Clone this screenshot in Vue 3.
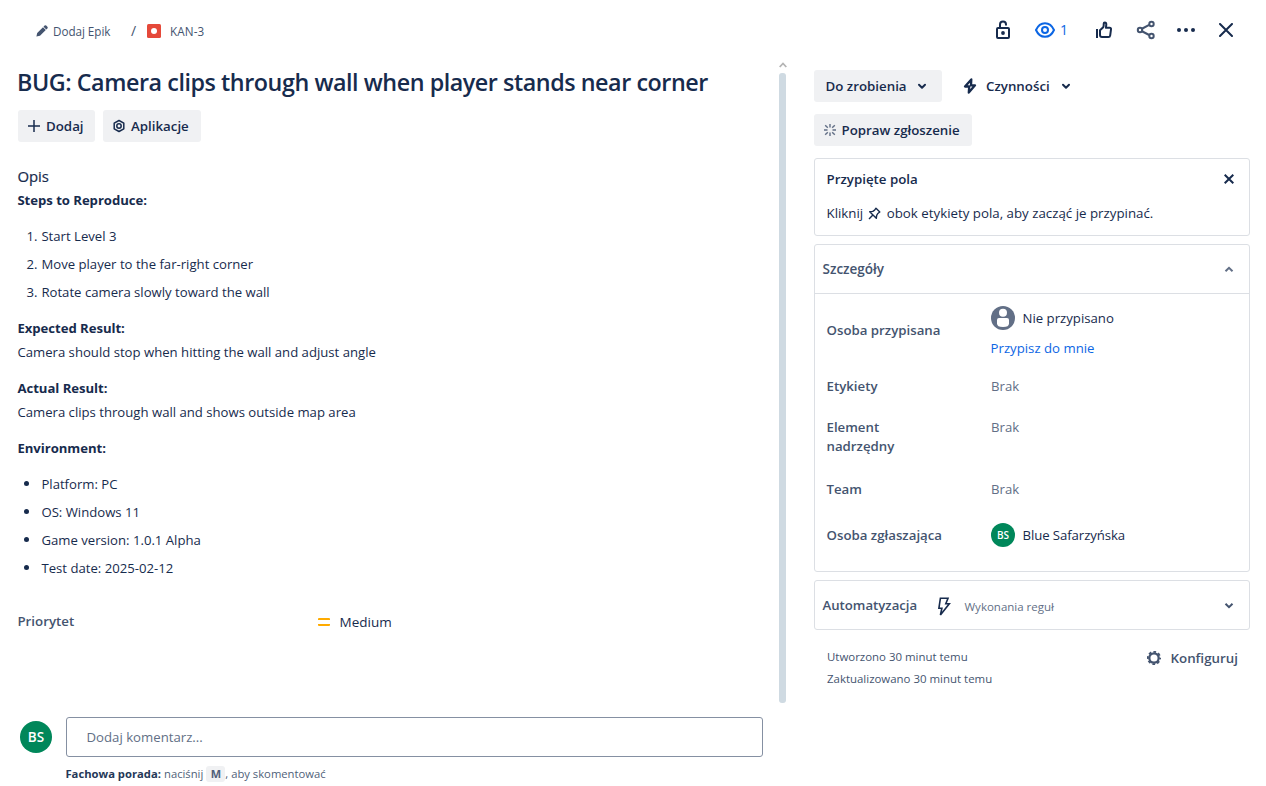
<script setup>
const steps = ['Start Level 3', 'Move player to the far-right corner', 'Rotate camera slowly toward the wall']
const env = ['Platform: PC', 'OS: Windows 11', 'Game version: 1.0.1 Alpha', 'Test date: 2025-02-12']
</script>

<template>
  <div class="page">
    <header class="top">
      <div class="crumbs">
        <svg class="pencil" width="12" height="12" viewBox="0 0 12 12"><path d="M0.4 11.6 1.2 8 7 2.200 9.800 5 4 10.8ZM7.500 1.700 8.600.6Q9.400-.1 10.200.6L11.4 1.8Q12.100 2.600 11.4 3.400L10.3 4.500Z" fill="#44546f" /></svg>
        <span class="epic">Dodaj Epik</span>
        <span class="slash">/</span>
        <svg class="bug" width="14" height="14" viewBox="0 0 14 14"><rect width="14" height="14" rx="1.5" fill="#e5493a" /><circle cx="7" cy="7" r="3" fill="#fff" /></svg>
        <span class="key">KAN-3</span>
      </div>
      <div class="tools">
        <svg class="t-lock" width="16" height="20" viewBox="0 0 16 20" fill="none" stroke="#172b4d" stroke-width="2"><rect x="2" y="8" width="12" height="10" rx="1" /><path d="M5 8V4.5Q5 1.6 8 1.6T11 4.5V5.4" /><circle cx="8" cy="13" r="1.9" fill="#172b4d" stroke="none" /></svg>
        <svg class="t-eye" width="22" height="18" viewBox="0 0 22 18" fill="none" stroke="#0c66e4" stroke-width="2"><path d="M2 9C4 4.500 7.300 2.200 11 2.200S18 4.500 20 9C18 13.500 14.700 15.800 11 15.800S4 13.500 2 9Z" /><circle cx="11" cy="9" r="3" /></svg>
        <span class="watch">1</span>
        <svg class="t-like" width="18" height="18" viewBox="0 0 18 18" fill="none" stroke="#172b4d" stroke-width="2" stroke-linejoin="round"><path d="M2 8V17" stroke-width="2" /><path d="M5 9.300 8.200 6.200Q8.700 5.400 8.700 4V2.800Q8.700 1.600 9.800 1.600 11.300 1.700 11.300 3.600L10.900 6.800H14.600Q16.200 6.800 16 8.300L15.200 14.300Q15 16 13.300 16H7Q5 16 5 14Z" /></svg>
        <svg class="t-share" width="20" height="20" viewBox="0 0 20 20" fill="none" stroke="#44546f" stroke-width="2"><path d="M5.500 9 13.200 4.900M5.500 11 13.200 15" /><circle cx="4" cy="10" r="2.200" /><circle cx="15.500" cy="4" r="2.200" /><circle cx="15.500" cy="16" r="2.200" /></svg>
        <svg class="t-more" width="18" height="4" viewBox="0 0 18 4" fill="#172b4d"><circle cx="2" cy="2" r="2" /><circle cx="9" cy="2" r="2" /><circle cx="16" cy="2" r="2" /></svg>
        <svg class="t-close" width="14" height="14" viewBox="0 0 14 14" stroke="#172b4d" stroke-width="2" stroke-linecap="round"><path d="M1 1 13 13M13 1 1 13" /></svg>
      </div>
    </header>

    <div class="columns">
      <main class="main">
        <h1>BUG: Camera clips through wall when player stands near corner</h1>
        <div class="actions">
          <button class="btn add"><svg width="12" height="12" viewBox="0 0 12 12" stroke="#172b4d" stroke-width="1.500"><path d="M6 0V12M0 6H12" /></svg>Dodaj</button>
          <button class="btn apps"><svg width="12" height="14" viewBox="0 0 12 14" fill="none" stroke="#172b4d" stroke-width="1.500"><path d="M6 1.500 10.800 4.200V9.800L6 12.500 1.200 9.800V4.200Z" stroke-linejoin="round" /><circle cx="6" cy="7" r="2.200" /></svg>Aplikacje</button>
        </div>

        <section class="desc">
          <h2>Opis</h2>
          <p class="strong">Steps to Reproduce:</p>
          <ol><li v-for="(s, i) in steps" :key="s"><span class="num">{{ i + 1 }}.</span>{{ s }}</li></ol>
          <p class="strong">Expected Result:</p>
          <p>Camera should stop when hitting the wall and adjust angle</p>
          <p class="strong gap">Actual Result:</p>
          <p>Camera clips through wall and shows outside map area</p>
          <p class="strong gap">Environment:</p>
          <ul><li v-for="e in env" :key="e"><span class="dot"></span>{{ e }}</li></ul>
        </section>

        <div class="priority">
          <span class="label">Priorytet</span>
          <span class="bars"></span>
          <span class="value">Medium</span>
        </div>

        <div class="comment">
          <span class="avatar big">BS</span>
          <div class="comment-body">
            <div class="input">Dodaj komentarz...</div>
            <div class="tip"><b>Fachowa porada:</b><span class="press">naciśnij</span><kbd>M</kbd><span class="rest">, aby skomentować</span></div>
          </div>
        </div>
      </main>

      <div class="scroll">
        <svg width="8" height="6" viewBox="0 0 8 6" fill="none" stroke="#b4b4b4" stroke-width="1.800"><path d="M.7 5 4 1.500 7.300 5" /></svg>
        <div class="thumb"></div>
      </div>

      <aside class="side">
        <div class="row">
          <button class="btn status">Do zrobienia<svg width="10" height="7" viewBox="0 0 10 7" fill="none" stroke="#172b4d" stroke-width="2" stroke-linecap="round" stroke-linejoin="round"><path d="M2 1.800 5 4.800 8 1.800" /></svg></button>
          <button class="btn flat"><svg class="bolt" width="14" height="16" viewBox="0 0 14 16" fill="none" stroke="#172b4d" stroke-width="2.300" stroke-linejoin="round"><path d="M8.300 1.500 2 8.500H6.200L5.800 14.500 12 7.300H8Z" /></svg>Czynności<svg width="10" height="7" viewBox="0 0 10 7" fill="none" stroke="#172b4d" stroke-width="2" stroke-linecap="round" stroke-linejoin="round"><path d="M2 1.800 5 4.800 8 1.800" /></svg></button>
        </div>
        <button class="btn improve"><svg width="12" height="12" viewBox="0 0 12 12" stroke="#626f86" stroke-width="1.400"><path d="M6 0V3.500M6 8.500V12M0 6H3.500M8.500 6H12M1.200 1.200 3.800 3.800M8.200 8.200 10.800 10.800M1.200 10.800 3.800 8.200M8.200 3.800 10.800 1.200" /></svg>Popraw zgłoszenie</button>

        <section class="card pinned">
          <div class="pin-head"><span class="pin-title">Przypięte pola</span><svg width="10" height="10" viewBox="0 0 10 10" stroke="#172b4d" stroke-width="2"><path d="M.7.7 9.300 9.300M9.300.7.7 9.300" /></svg></div>
          <div class="pin-text"><span class="click">Kliknij</span><svg width="13" height="13" viewBox="0 0 13 13" fill="none" stroke="#172b4d" stroke-width="1.400" stroke-linejoin="round"><path d="M8 1.200 11.800 5 9.800 6.500 8.700 8.300 8.300 11.300 1.700 4.700 4.800 4.400 6.600 3.200ZM4.900 8.100 1 12" /></svg><span class="next">obok etykiety pola, aby zacząć je przypinać.</span></div>
        </section>

        <section class="card details">
          <div class="card-head"><span class="szcz">Szczegóły</span><svg width="10" height="7" viewBox="0 0 10 7" fill="none" stroke="#626f86" stroke-width="2"><path d="M1.500 5.200 5 1.800 8.500 5.200" /></svg></div>
          <dl>
            <div class="field f1"><dt>Osoba przypisana</dt><dd><div class="person"><svg width="24" height="24" viewBox="0 0 24 24"><circle cx="12" cy="12" r="12" fill="#626f86" /><circle cx="12" cy="6.800" r="4" fill="#fff" /><path d="M6 14Q6 12 8 12H16Q18 12 18 14V17.500Q18 21 12 21T6 17.500Z" fill="#fff" /></svg><span>Nie przypisano</span></div><a class="assign">Przypisz do mnie</a></dd></div>
            <div class="field f2"><dt>Etykiety</dt><dd>Brak</dd></div>
            <div class="field f3"><dt>Element<br />nadrzędny</dt><dd>Brak</dd></div>
            <div class="field f4"><dt>Team</dt><dd>Brak</dd></div>
            <div class="field f5"><dt>Osoba zgłaszająca</dt><dd><div class="person"><span class="avatar small">BS</span><span class="reporter">Blue Safarzyńska</span></div></dd></div>
          </dl>
        </section>

        <section class="card auto">
          <span class="auto-title">Automatyzacja</span>
          <svg class="zap" width="14" height="20" viewBox="0 0 14 20" fill="none" stroke="#172b4d" stroke-width="1.600" stroke-linejoin="miter"><path d="M3.400 1.300H11L8.800 6.800H12.300L3.400 18 4.900 11.200H1.900Z" /></svg>
          <span class="runs">Wykonania reguł</span>
          <svg class="end" width="10" height="7" viewBox="0 0 10 7" fill="none" stroke="#44546f" stroke-width="2"><path d="M1.500 1.800 5 5.200 8.500 1.800" /></svg>
        </section>

        <footer>
          <div class="dates"><div>Utworzono 30 minut temu</div><div>Zaktualizowano 30 minut temu</div></div>
          <div class="config"><svg width="14" height="14" viewBox="-7 -7 14 14" fill="none" stroke="#44546f"><circle r="4.700" stroke-width="2.300" /><circle r="6.200" stroke-width="1.800" stroke-dasharray="2.700 2.170" stroke-dashoffset="1.350" /></svg><span>Konfiguruj</span></div>
        </footer>
      </aside>
    </div>
  </div>
</template>

<style>
body { background: #fff; }
</style>

<style scoped>
* { box-sizing: border-box; }
h1, h2, p, ol, ul, dl, dd, dt { margin: 0; padding: 0; }
svg { flex: none; display: block; }
.page { width: 1266px; height: 786px; overflow: hidden; display: flex; flex-direction: column; background: #fff; color: #172b4d; font: 400 13.500px/20px "Open Sans", "Noto Sans", sans-serif; white-space: nowrap; }
.top { height: 60px; flex: none; display: flex; justify-content: space-between; padding: 0 33px 0 36px; align-items: center; }
.crumbs { display: flex; align-items: center; color: #44546f; font-size: 11.700px; height: 20px; margin-top: 1px; }
.epic { margin-left: 5px; width: 78px; letter-spacing: -0.05px; }
.slash { width: 16px; font-size: 14px; }
.key { margin-left: 9px; letter-spacing: 0.1px; }
.tools { display: flex; align-items: center; height: 24px; }
.t-eye { margin-left: 23px; }
.watch { color: #0c66e4; margin-left: 4px; width: 8px; font-size: 14px; }
.t-like { margin-left: 27px; }
.t-share { margin-left: 23px; }
.t-more { margin-left: 21px; }
.t-close { margin-left: 24px; }
.columns { display: flex; flex: 1; min-height: 0; }
.main { width: 779px; flex: none; padding: 8px 16px 0 18px; }
h1 { font-size: 23.300px; line-height: 28px; font-weight: 600; letter-spacing: -0.440px; margin-left: -1px; }
.actions { display: flex; gap: 8px; margin-top: 14px; }
.btn { border: 0; margin: 0; height: 32px; border-radius: 3px; background: #f0f1f3; color: #172b4d; font: 600 13.300px/20px "Open Sans", "Noto Sans", sans-serif; display: flex; align-items: center; padding: 0 10px; white-space: nowrap; }
.add { width: 77px; gap: 6px; }
.apps { width: 98px; gap: 6px; }
.desc { margin: 24px 0 0 -0.600px; font-size: 13.150px; line-height: 24px; }
h2 { font-size: 14.900px; line-height: 20px; font-weight: 500; margin-bottom: 2px; -webkit-text-stroke: 0.2px #172b4d; }
.strong { font-weight: 700; letter-spacing: -0.04px; }
.gap, ol + .strong { margin-top: 12px; }
ol, ul { list-style: none; padding: 12px 0 0 24px; display: flex; flex-direction: column; gap: 4px; }
li { position: relative; height: 24px; }
.num { position: absolute; left: -15px; }
.dot { position: absolute; left: -17px; top: 9px; width: 5px; height: 5px; border-radius: 50%; background: #172b4d; }
.priority { display: flex; align-items: center; margin-top: 32px; height: 20px; }
.label { width: 300.600px; margin: -2px 0 0 -0.600px; font-weight: 600; color: #44546f; font-size: 13.300px; }
.bars { width: 12px; height: 8px; border-top: 2px solid #ffab00; border-bottom: 2px solid #ffab00; border-radius: 1px; margin-right: 9.500px; }
.comment { display: flex; margin-top: 85px; padding-left: 2px; }
.avatar { border-radius: 50%; background: #00875a; color: #fff; display: flex; align-items: center; justify-content: center; font-weight: 600; flex: none; }
.big { width: 32px; height: 32px; font-size: 13.500px; margin-top: 4px; }
.small { width: 24px; height: 24px; font-size: 10px; }
.comment-body { margin-left: 14px; flex: 1; }
.input { height: 40px; border: 1px solid #8590a2; border-radius: 3px; padding: 9px 19.500px; color: #626f86; font-size: 13.200px; }
.tip { display: flex; align-items: center; height: 16px; margin: 9px 0 0 -0.600px; font-size: 11.250px; color: #505f79; }
.tip b { color: #253858; }
.press { margin-left: 3px; }
kbd { font: 700 11px/16px "Open Sans", sans-serif; background: #f0f1f3; border-radius: 3px; width: 19px; text-align: center; margin-left: 3px; }
.scroll { width: 7px; display: flex; flex-direction: column; align-items: center; padding-top: 2px; }
.thumb { width: 7px; height: 630px; margin-top: 5px; border-radius: 3px; background: #cfdae2; }
.side { width: 436px; margin-left: 28px; padding-top: 10px; }
.row { display: flex; gap: 12px; }
.status { width: 128px; padding: 0 15px 0 11.500px; justify-content: space-between; }
.flat { background: none; padding: 0 9px; }
.flat .bolt { margin-right: 9px; }
.flat svg:last-child { margin-left: 11px; }
.improve { width: 158px; margin-top: 12px; gap: 5.500px; }
.card { border: 1px solid #dcdfe4; border-radius: 3px; }
.pinned { height: 78px; margin-top: 12px; padding: 10px 15px 0 11.500px; }
.pin-head { display: flex; justify-content: space-between; align-items: center; font-weight: 600; font-size: 13.300px; }
.pin-text { display: flex; align-items: center; margin-top: 14px; font-size: 13.300px; }
.pin-text svg { margin: 1px 5.500px 0 5px; }
.details { height: 328px; margin-top: 8px; }
.card-head { height: 49px; border-bottom: 1px solid #dcdfe4; display: flex; align-items: center; justify-content: space-between; padding: 0 15px 0 7.500px; font-weight: 600; color: #44546f; font-size: 13.500px; }
.field { display: grid; grid-template-columns: 164.500px 1fr; padding-left: 11.500px; align-items: center; }
dt { font-weight: 600; color: #44546f; font-size: 13.250px; line-height: 19px; }
dd { color: #626f86; font-size: 13.200px; }
.person { display: flex; align-items: center; gap: 7.500px; color: #172b4d; height: 24px; }
.reporter { letter-spacing: -0.08px; }
.assign { display: block; color: #0c66e4; margin: 8px 0 0 -0.400px; }
.f1 { height: 72px; }
.f1 dd { padding-top: 4px; }
.f2 { height: 40px; }
.f3 { height: 62px; align-items: start; padding-top: 12px; }
.f3 dd { line-height: 18px; }
.f4 { height: 42px; }
.f5 { height: 50px; }
.auto { height: 50px; margin-top: 8px; display: flex; align-items: center; padding: 0 15px 0 7.500px; color: #44546f; }
.auto-title { font-weight: 600; font-size: 13.200px; width: 114px; }
.zap { margin-top: 3px; }
.runs { margin-left: 14px; font-size: 11.500px; color: #626f86; margin-top: 3px; }
.end { margin-left: auto; }
footer { display: flex; justify-content: space-between; padding: 16px 12px 0 13px; color: #44546f; }
.dates { font-size: 11.450px; line-height: 22px; }
.config { display: flex; align-items: center; height: 24px; gap: 9.500px; font-weight: 600; font-size: 13.350px; }
</style>
